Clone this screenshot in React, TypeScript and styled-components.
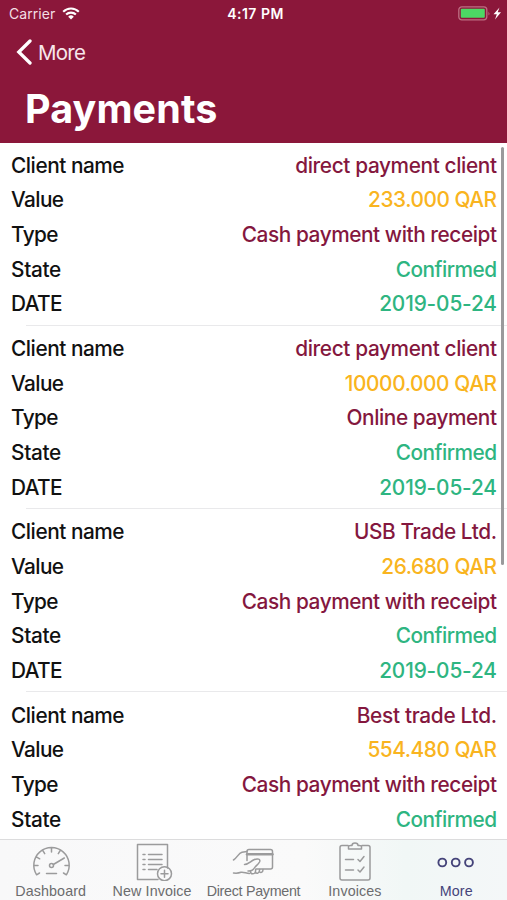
import React from "react";
import styled, { createGlobalStyle } from "styled-components";

const colors = {
  maroon: "#8b173a",
  wine: "#84173e",
  amber: "#f9b420",
  green: "#2eb581",
  tab: "#6c6c6e",
  icon: "#9b9b9c",
  active: "#45447a",
};

const GlobalStyle = createGlobalStyle`
  * { box-sizing: border-box; }
  body { margin: 0; background: #fff; font-family: Inter, "Liberation Sans", sans-serif; }
`;

const Screen = styled.div`
  width: 507px;
  height: 900px;
  display: flex;
  flex-direction: column;
  overflow: hidden;
  background: #fff;
`;

const Header = styled.header`
  flex: none;
  height: 142.5px;
  background: ${colors.maroon};
  color: #fff;
`;

const StatusBar = styled.div`
  display: grid;
  grid-template-columns: 1fr auto 1fr;
  align-items: center;
  height: 27px;
  padding: 0 5px 0 9px;
  font-size: 14px;
  line-height: 27px;
`;

const Carrier = styled.div`
  display: flex;
  align-items: center;
  gap: 7px;
  letter-spacing: 0.05px;
  color: #f3dfe5;
`;

const Clock = styled.div`
  font-weight: 600;
  letter-spacing: 0.5px;
`;

const Power = styled.div`
  display: flex;
  justify-content: flex-end;
`;

const BackButton = styled.button`
  display: flex;
  align-items: center;
  gap: 5px;
  height: 50px;
  padding: 1px 0 0 16px;
  border: 0;
  background: none;
  color: #f7e6eb;
  font: 400 20.5px/50px Inter, sans-serif;
  letter-spacing: -0.75px;
`;

const Title = styled.h1`
  margin: 7px 0 0 25px;
  font-size: 39.5px;
  line-height: 50px;
  font-weight: 700;
  letter-spacing: 0.1px;
`;

const List = styled.main`
  position: relative;
  flex: 1;
  min-height: 0;
  overflow: hidden;
`;

const Scrollbar = styled.div`
  position: absolute;
  top: 4px;
  right: 3.5px;
  width: 3px;
  height: 418px;
  border-radius: 2px;
  background: #9a9a9c;
`;

const Record = styled.section`
  height: 183.3px;
  padding: 6.4px 10px 0 11px;
  background: linear-gradient(#e9e9eb, #e9e9eb) 26px 100% / 100% 1px no-repeat;
`;

const Row = styled.div`
  display: flex;
  justify-content: space-between;
  height: 34.6px;
  font-size: 20.8px;
  font-weight: 450;
  line-height: 34.6px;
  white-space: nowrap;
`;

const Label = styled.span<{ $spacing: number }>`
  color: #111;
  letter-spacing: ${(p) => p.$spacing}px;
`;

const Value = styled.span<{ $color: string; $spacing: number }>`
  color: ${(p) => p.$color};
  letter-spacing: ${(p) => p.$spacing}px;
  margin-right: ${(p) => -p.$spacing}px;
`;

const TabBar = styled.nav`
  flex: none;
  display: grid;
  grid-template-columns: repeat(5, 1fr);
  height: 61px;
  border-top: 1.5px solid #dcdcdd;
  background: linear-gradient(90deg, #f8f8f9 0%, #fafafa 60%, #f1f7f6 80%, #f4f7f8 100%);
`;

const Tab = styled.div<{ $active?: boolean }>`
  display: flex;
  flex-direction: column;
  align-items: center;
  color: ${(p) => (p.$active ? colors.active : colors.icon)};
`;

const TabLabel = styled.span<{ $active?: boolean; $spacing: number }>`
  padding-top: 1px;
  font: 400 14.3px/18px "Liberation Sans", sans-serif;
  letter-spacing: ${(p) => p.$spacing}px;
  color: ${(p) => (p.$active ? colors.active : colors.tab)};
  white-space: nowrap;
`;

const TabIcon = styled.svg`
  flex: none;
  width: 44px;
  height: 41px;
  fill: none;
  stroke: currentColor;
  stroke-width: 1.5;
  stroke-linecap: round;
  stroke-linejoin: round;
`;

interface Payment {
  client: string;
  clientSpacing: number;
  value: string;
  valueSpacing: number;
  type: string;
  date?: string;
}

const records: Payment[] = [
  { client: "direct payment client", clientSpacing: -0.37, value: "233.000 QAR", valueSpacing: -0.45, type: "Cash payment with receipt", date: "2019-05-24" },
  { client: "direct payment client", clientSpacing: -0.37, value: "10000.000 QAR", valueSpacing: -0.38, type: "Online payment", date: "2019-05-24" },
  { client: "USB Trade Ltd.", clientSpacing: -0.4, value: "26.680 QAR", valueSpacing: -0.43, type: "Cash payment with receipt", date: "2019-05-24" },
  { client: "Best trade Ltd.", clientSpacing: -0.3, value: "554.480 QAR", valueSpacing: -0.45, type: "Cash payment with receipt" },
];

const GaugeIcon = () => (
  <TabIcon viewBox="0 0 44 41">
    <path d="M10.500 33 7.600 34.800A17.700 17.700 0 1 1 37.400 34.800L34.500 33M5 25.500h4M36 25.500h4M7.300 16.800l3.400 2M13.700 10.300l2 3.400M22.500 8v4M31.300 10.300l-2 3.400M24.300 24.500l11-6.500M17.500 33.500h10" />
    <circle cx="22.500" cy="25.500" r="2" />
  </TabIcon>
);

const NewInvoiceIcon = () => (
  <TabIcon viewBox="0 0 44 41">
    <path d="M28 39.500H7.500V4.500h30V28M13 14.500h2M18.500 14.500H32M13 19.500h2M18.500 19.500H32M13 24.500h2M18.500 24.500H32M13 29.500h2M18.500 29.500H27" />
    <circle cx="34.500" cy="33.700" r="7" />
    <path d="M31 33.700h7M34.500 30.200v7" />
  </TabIcon>
);

const PaymentIcon = () => (
  <TabIcon viewBox="0 0 44 41">
    <path d="M16 20.500V11.500q0-2 2-2h21.500q2 0 2 2v15.500q0 2-2 2H25" />
    <path d="M16 14.300h25.500" strokeWidth="2.400" />
    <path d="M2.500 20C6 18 7.500 13 11 12.200L16 11.500M2.500 33q4.500.5 7.500-.7c3-.5 5 1.200 8.500 1.200M13.500 24.500c4 0 6-3.200 9.500-4.800 3.500-1.500 7-.7 5.500 2.300-1.500 2.800-4 3.800-5.500 6.500-1.200 2.200-3.500 2.700-6 2.500M20 30.500c-1 2 .2 3.500 2 3.300 2 0 2.800-2 2.600-4.300M24.300 32.300c1.500 1.800 4 1.200 4.400-2.800M28.300 31.800c2 1.500 3.700.2 3.700-2.300" />
  </TabIcon>
);

const ClipboardIcon = () => (
  <TabIcon viewBox="0 0 44 41">
    <path d="M15 5.500H9q-2 0-2 2v30.500q0 2 2 2h26q2 0 2-2V7.500q0-2-2-2h-6M15.500 9V6.500q0-1 2-1h1.500q0-2.500 3-2.500t3 2.500h1.500q2 0 2 1V9zM12.500 19.500h8M12.500 30h8M25 19.500l2 2 4-5M25 30l2 2 4-5" />
  </TabIcon>
);

const MoreIcon = () => (
  <TabIcon viewBox="0 0 44 41">
    <g strokeWidth="1.900">
      <circle cx="8.300" cy="22.500" r="3.900" />
      <circle cx="21.700" cy="22.500" r="3.900" />
      <circle cx="35" cy="22.500" r="3.900" />
    </g>
  </TabIcon>
);

const tabs = [
  { label: "Dashboard", icon: <GaugeIcon />, spacing: 0.1 },
  { label: "New Invoice", icon: <NewInvoiceIcon />, spacing: 0.1 },
  { label: "Direct Payment", icon: <PaymentIcon />, spacing: -0.3 },
  { label: "Invoices", icon: <ClipboardIcon />, spacing: 0.1 },
  { label: "More", icon: <MoreIcon />, spacing: 0.1, active: true },
];

export default function App() {
  return (
    <Screen>
      <GlobalStyle />
      <Header>
        <StatusBar>
          <Carrier>
            Carrier
            <svg width="18" height="13" viewBox="0 0 18 13" fill="none" stroke="#fff" strokeWidth="2.1">
              <path d="M1.200 4.700a11 11 0 0 1 15.600 0M4.100 7.600a7 7 0 0 1 9.800 0" />
              <path d="M6.200 9.700a4 4 0 0 1 5.600 0L9 12.500z" fill="#fff" stroke="none" />
            </svg>
          </Carrier>
          <Clock>4:17 PM</Clock>
          <Power>
            <svg width="44" height="15" viewBox="0 0 44 15">
              <rect x="0.800" y="0.800" width="28" height="13" rx="3" fill="none" stroke="#bd6f82" strokeWidth="1.300" />
              <rect x="2.800" y="2.800" width="24" height="9" rx="1" fill="#4cd964" />
              <path d="M30.500 5.500q1.800 2 0 4z" fill="#bd6f82" />
              <path d="M41.500 1.500 35.500 8.300h3.300L37 13.500l6-7.300h-3.300z" fill="#fff" />
            </svg>
          </Power>
        </StatusBar>
        <BackButton>
          <svg width="17" height="27" viewBox="0 0 17 27" fill="none" stroke="#fff" strokeWidth="3.300" strokeLinecap="round" strokeLinejoin="miter">
            <path d="M14 2 2.800 13l11.200 11" />
          </svg>
          More
        </BackButton>
        <Title>Payments</Title>
      </Header>
      <List>
        {records.map((r, i) => (
          <Record key={i}>
            <Row>
              <Label $spacing={-0.45}>Client name</Label>
              <Value $color={colors.wine} $spacing={r.clientSpacing}>{r.client}</Value>
            </Row>
            <Row>
              <Label $spacing={-0.6}>Value</Label>
              <Value $color={colors.amber} $spacing={r.valueSpacing}>{r.value}</Value>
            </Row>
            <Row>
              <Label $spacing={-0.6}>Type</Label>
              <Value $color={colors.wine} $spacing={-0.43}>{r.type}</Value>
            </Row>
            <Row>
              <Label $spacing={-0.3}>State</Label>
              <Value $color={colors.green} $spacing={-0.5}>Confirmed</Value>
            </Row>
            {r.date && (
              <Row>
                <Label $spacing={-0.6}>DATE</Label>
                <Value $color={colors.green} $spacing={-0.13}>{r.date}</Value>
              </Row>
            )}
          </Record>
        ))}
        <Scrollbar />
      </List>
      <TabBar>
        {tabs.map((t) => (
          <Tab key={t.label} $active={t.active}>
            {t.icon}
            <TabLabel $active={t.active} $spacing={t.spacing}>{t.label}</TabLabel>
          </Tab>
        ))}
      </TabBar>
    </Screen>
  );
}
